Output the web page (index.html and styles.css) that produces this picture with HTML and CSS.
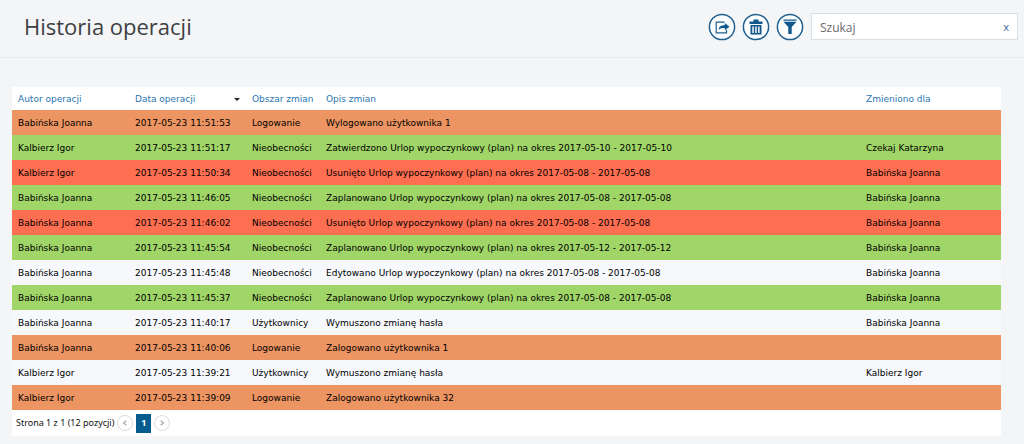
FILE: index.html
```html
<!DOCTYPE html>
<html lang="pl">
<head>
<meta charset="utf-8">
<meta name="viewport" content="width=device-width, initial-scale=1">
<title>Historia operacji</title>
<link rel="stylesheet" href="styles.css">
</head>
<body>
<header class="topbar">
  <h1 class="title">Historia operacji</h1>
  <div class="tools">
    <button class="tool" type="button" aria-label="Eksportuj">
      <svg viewBox="0 0 28 28"><circle class="ring" cx="14" cy="14" r="12.6"/><path class="thin" d="M16.500 9.200H8.200v10.600h10.300v-3"/><path class="solid" d="M10.800 16.800c.2-3.400 2.400-4.500 6-4.500V10l4.700 3.700-4.700 3.600v-2.200c-2.700-.1-4.600.2-6 1.700z"/></svg>
    </button>
    <button class="tool" type="button" aria-label="Usuń">
      <svg viewBox="0 0 28 28"><circle class="ring" cx="14" cy="14" r="12.6"/><path class="solid" fill-rule="evenodd" d="M11.500 6.500h5v2h4v2.500h-13V8.500h4zM8.500 12h11v9.500h-11zM10.300 13.500v6.500h1.500v-6.500zm2.900 0v6.500h1.500v-6.500zm2.900 0v6.500h1.500v-6.500z"/></svg>
    </button>
    <button class="tool" type="button" aria-label="Filtruj">
      <svg viewBox="0 0 28 28"><circle class="ring" cx="14" cy="14" r="12.6"/><path class="solid" d="M7.500 6.500h13v1.200h-13zM7.500 8.700h13l-4.800 5.300v7h-3.400v-7z"/></svg>
    </button>
    <div class="search">
      <input class="search-input" type="text" placeholder="Szukaj" aria-label="Szukaj">
      <button class="clear" type="button" aria-label="Wyczyść">x</button>
    </div>
  </div>
</header>
<main class="panel">
  <table class="grid">
    <colgroup><col class="c-author"><col class="c-date"><col class="c-area"><col><col class="c-for"></colgroup>
    <thead>
      <tr><th>Autor operacji</th><th><span class="sorted">Data operacji<i class="caret"></i></span></th><th>Obszar zmian</th><th>Opis zmian</th><th>Zmieniono dla</th></tr>
    </thead>
    <tbody>
      <tr class="orange"><td>Babińska Joanna</td><td>2017-05-23 11:51:53</td><td>Logowanie</td><td>Wylogowano użytkownika 1</td><td></td></tr>
      <tr class="green"><td>Kalbierz Igor</td><td>2017-05-23 11:51:17</td><td>Nieobecności</td><td>Zatwierdzono Urlop wypoczynkowy (plan) na okres 2017-05-10 - 2017-05-10</td><td>Czekaj Katarzyna</td></tr>
      <tr class="red"><td>Kalbierz Igor</td><td>2017-05-23 11:50:34</td><td>Nieobecności</td><td>Usunięto Urlop wypoczynkowy (plan) na okres 2017-05-08 - 2017-05-08</td><td>Babińska Joanna</td></tr>
      <tr class="green"><td>Babińska Joanna</td><td>2017-05-23 11:46:05</td><td>Nieobecności</td><td>Zaplanowano Urlop wypoczynkowy (plan) na okres 2017-05-08 - 2017-05-08</td><td>Babińska Joanna</td></tr>
      <tr class="red"><td>Babińska Joanna</td><td>2017-05-23 11:46:02</td><td>Nieobecności</td><td>Usunięto Urlop wypoczynkowy (plan) na okres 2017-05-08 - 2017-05-08</td><td>Babińska Joanna</td></tr>
      <tr class="green"><td>Babińska Joanna</td><td>2017-05-23 11:45:54</td><td>Nieobecności</td><td>Zaplanowano Urlop wypoczynkowy (plan) na okres 2017-05-12 - 2017-05-12</td><td>Babińska Joanna</td></tr>
      <tr class="plain"><td>Babińska Joanna</td><td>2017-05-23 11:45:48</td><td>Nieobecności</td><td>Edytowano Urlop wypoczynkowy (plan) na okres 2017-05-08 - 2017-05-08</td><td>Babińska Joanna</td></tr>
      <tr class="green"><td>Babińska Joanna</td><td>2017-05-23 11:45:37</td><td>Nieobecności</td><td>Zaplanowano Urlop wypoczynkowy (plan) na okres 2017-05-08 - 2017-05-08</td><td>Babińska Joanna</td></tr>
      <tr class="plain"><td>Babińska Joanna</td><td>2017-05-23 11:40:17</td><td>Użytkownicy</td><td>Wymuszono zmianę hasła</td><td>Babińska Joanna</td></tr>
      <tr class="orange"><td>Babińska Joanna</td><td>2017-05-23 11:40:06</td><td>Logowanie</td><td>Zalogowano użytkownika 1</td><td></td></tr>
      <tr class="plain"><td>Kalbierz Igor</td><td>2017-05-23 11:39:21</td><td>Użytkownicy</td><td>Wymuszono zmianę hasła</td><td>Kalbierz Igor</td></tr>
      <tr class="orange"><td>Kalbierz Igor</td><td>2017-05-23 11:39:09</td><td>Logowanie</td><td>Zalogowano użytkownika 32</td><td></td></tr>
    </tbody>
  </table>
  <nav class="pager" aria-label="Strony">
    <span>Strona 1 z 1 (12 pozycji)</span>
    <button class="step" type="button" disabled aria-label="Poprzednia"><svg viewBox="0 0 16 16"><path d="M9.500 5.500L6.500 8l3 2.500"/></svg></button>
    <button class="page" type="button">1</button>
    <button class="step" type="button" disabled aria-label="Następna"><svg viewBox="0 0 16 16"><path d="M6.500 5.500L9.500 8l-3 2.500"/></svg></button>
  </nav>
</main>
</body>
</html>
```
FILE: styles.css
```css
* { box-sizing: border-box; }
body { margin: 0; background: #f3f5f7; color: #111; font-family: "Open Sans", "Noto Sans", sans-serif; }
button { margin: 0; padding: 0; border: 0; background: none; font: inherit; cursor: pointer; }

.topbar { display: flex; align-items: center; justify-content: space-between; height: 58px; padding: 0 6px 4px 24px; border-bottom: 1px solid #e8eaed; }
.title { margin: 0; padding-bottom: 2px; font-size: 22px; font-weight: 400; line-height: 30px; color: #3e4043; }
.tools { display: flex; align-items: center; gap: 6px; }
.tool { width: 28px; height: 28px; }
.tool svg { display: block; width: 28px; height: 28px; }
.ring { fill: #fafcfd; stroke: #1f5f8f; stroke-width: 1.5; }
.thin { fill: none; stroke: #1f5f8f; stroke-width: 1.2; }
.solid { fill: #12578c; }
.search { display: flex; align-items: center; width: 207px; height: 27px; margin-left: 1px; padding: 1px 8px 0; background: #fff; border: 1px solid #d8dfe6; }
.search-input { flex: 1; min-width: 0; padding: 1px 0 0; border: 0; outline: 0; background: none; font: 12px/18px "Open Sans", sans-serif; color: #555; }
.search-input::placeholder { color: #6b6b6b; opacity: 1; }
.clear { font-size: 11px; line-height: 14px; color: #3a6a9b; }

.panel { margin: 29px 23px 0 12px; background: #fff; }
.grid { width: 100%; table-layout: fixed; border-collapse: collapse; font: 9px/13px "DejaVu Sans", sans-serif; color: #000; }
.grid th, .grid td { height: 25px; padding: 2px 0 0 6px; text-align: left; white-space: nowrap; }
.grid th { height: 23px; font-weight: 400; color: #2a75b0; }
.c-author { width: 117px; }
.c-date { width: 117px; }
.c-area { width: 74px; }
.c-for { width: 141px; }
.sorted { display: flex; align-items: center; justify-content: space-between; padding-right: 6px; }
.caret { border: 3px solid transparent; border-top-color: #222; border-bottom: 0; }
.orange { background: #ec9462; }
.green { background: #a0d568; }
.red { background: #fe6e50; }
.plain { background: #f6f8fc; }

.pager { display: flex; align-items: center; height: 26px; padding: 0 4px; font-size: 9px; line-height: 14px; font-family: "Noto Sans", sans-serif; }
.step { width: 16px; height: 16px; margin: 0 3px; border: 1px solid #ddd; border-radius: 50%; }
.step svg { display: block; width: 14px; height: 14px; fill: none; stroke: #aaa; stroke-width: 1.5; }
.page { width: 15px; height: 19px; background: #075b8d; color: #fff; font-weight: 700; }
```
